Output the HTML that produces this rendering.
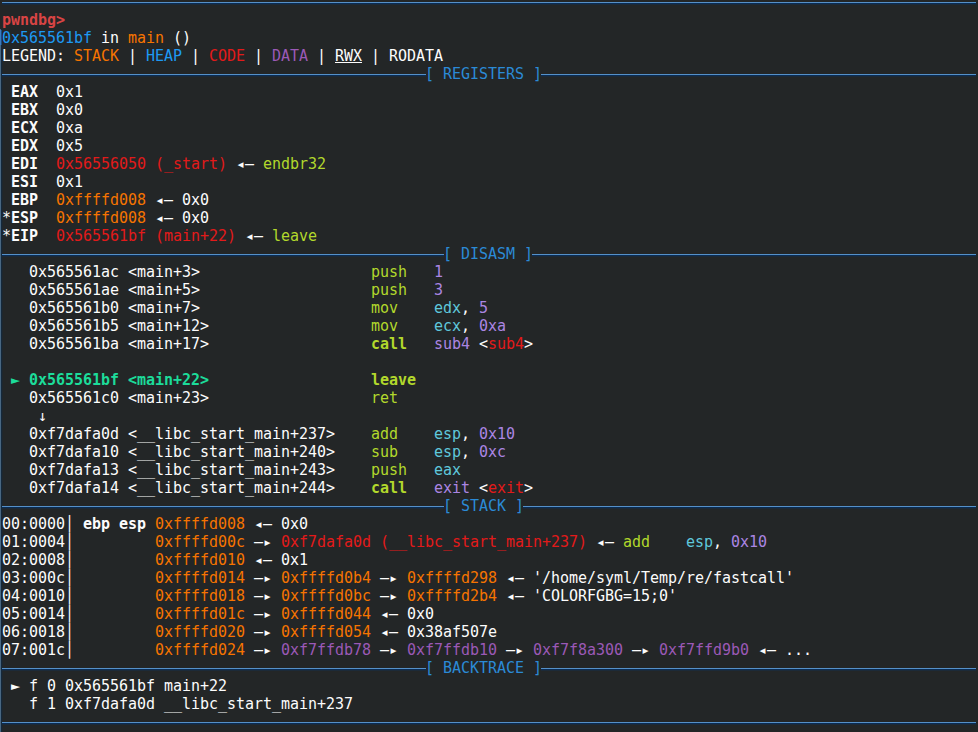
<!DOCTYPE html>
<html lang="en"><head><meta charset="utf-8"><title>pwndbg</title>
<style>
html,body{margin:0;padding:0;background:#232627;}
body{width:978px;height:732px;position:relative;overflow:hidden;color:#fcfcfc;
 font-family:"DejaVu Sans Mono","Liberation Mono",monospace;font-size:15px;line-height:18px;}
.r{position:absolute;left:2px;height:18px;white-space:pre;letter-spacing:-0.0308px;font-kerning:none;font-variant-ligatures:none;}
.b{font-weight:bold}
.p{color:#d84444}
.bl{color:#1d99f3}
.st{color:#f67400}
.cd{color:#e21a1a}
.da{color:#9b59b6}
.g{color:#b2d82c}
.n{color:#ab85e2}
.rg{color:#5fc8dc}
.cur{color:#1cdc9a}
.u{text-decoration:underline}
.ban{color:#2b8ad6}
.hl{position:absolute;height:3px;background:linear-gradient(#5590c8 0,#5590c8 33.3%,#0a2c54 33.3%,#0a2c54 66.6%,#1c2a38 66.6%,#1c2a38 100%);}
.vl{position:absolute;left:0;top:29px;width:3px;height:703px;background:linear-gradient(90deg,#486782 0,#486782 33.3%,#14283b 33.3%,#14283b 66.6%,#1e272e 66.6%);}
.vl2{position:absolute;left:0;top:30px;width:2px;height:15px;background:linear-gradient(90deg,#3a7cc0 0,#3a7cc0 50%,#1d4a7c 50%);}
</style></head><body>
<div class="vl"></div><div class="vl2"></div>

<div class="hl" style="left:2px;top:2px;width:974px"></div>
<div class="r" style="top:11px"><span class="p b">pwndbg&gt;</span></div>
<div class="r" style="top:29px"><span class="bl">0x565561bf</span> in <span class="st">main</span> ()</div>
<div class="r" style="top:47px">LEGEND: <span class="st">STACK</span> | <span class="bl">HEAP</span> | <span class="cd">CODE</span> | <span class="da">DATA</span> | <span class="u">RWX</span> | RODATA</div>
<div class="hl" style="left:2px;top:74px;width:424px"></div>
<div class="hl" style="left:541px;top:74px;width:435px"></div>
<div class="r ban" style="top:65px;left:425px">[ REGISTERS ]</div>
<div class="r" style="top:83px"> <span class="b">EAX</span>  0x1</div>
<div class="r" style="top:101px"> <span class="b">EBX</span>  0x0</div>
<div class="r" style="top:119px"> <span class="b">ECX</span>  0xa</div>
<div class="r" style="top:137px"> <span class="b">EDX</span>  0x5</div>
<div class="r" style="top:155px"> <span class="b">EDI</span>  <span class="cd">0x56556050 (_start)</span> ◂— <span class="g">endbr32</span></div>
<div class="r" style="top:173px"> <span class="b">ESI</span>  0x1</div>
<div class="r" style="top:191px"> <span class="b">EBP</span>  <span class="st">0xffffd008</span> ◂— 0x0</div>
<div class="r" style="top:209px">*<span class="b">ESP</span>  <span class="st">0xffffd008</span> ◂— 0x0</div>
<div class="r" style="top:227px">*<span class="b">EIP</span>  <span class="cd">0x565561bf (main+22)</span> ◂— <span class="g">leave</span></div>
<div class="hl" style="left:2px;top:254px;width:442px"></div>
<div class="hl" style="left:532px;top:254px;width:444px"></div>
<div class="r ban" style="top:245px;left:443px">[ DISASM ]</div>
<div class="r" style="top:263px">   0x565561ac &lt;main+3&gt;                   <span class="g">push</span>   <span class="n">1</span></div>
<div class="r" style="top:281px">   0x565561ae &lt;main+5&gt;                   <span class="g">push</span>   <span class="n">3</span></div>
<div class="r" style="top:299px">   0x565561b0 &lt;main+7&gt;                   <span class="g">mov</span>    <span class="rg">edx</span>, <span class="n">5</span></div>
<div class="r" style="top:317px">   0x565561b5 &lt;main+12&gt;                  <span class="g">mov</span>    <span class="rg">ecx</span>, <span class="n">0xa</span></div>
<div class="r" style="top:335px">   0x565561ba &lt;main+17&gt;                  <span class="g b">call</span>   <span class="n">sub4</span> &lt;<span class="cd">sub4</span>&gt;</div>
<div class="r" style="top:371px"><span class="cur b"> ► 0x565561bf &lt;main+22&gt;</span>                  <span class="g b">leave</span></div>
<div class="r" style="top:389px">   0x565561c0 &lt;main+23&gt;                  <span class="g">ret</span></div>
<div class="r" style="top:407px">    ↓</div>
<div class="r" style="top:425px">   0xf7dafa0d &lt;__libc_start_main+237&gt;    <span class="g">add</span>    <span class="rg">esp</span>, <span class="n">0x10</span></div>
<div class="r" style="top:443px">   0xf7dafa10 &lt;__libc_start_main+240&gt;    <span class="g">sub</span>    <span class="rg">esp</span>, <span class="n">0xc</span></div>
<div class="r" style="top:461px">   0xf7dafa13 &lt;__libc_start_main+243&gt;    <span class="g">push</span>   <span class="rg">eax</span></div>
<div class="r" style="top:479px">   0xf7dafa14 &lt;__libc_start_main+244&gt;    <span class="g b">call</span>   <span class="n">exit</span> &lt;<span class="cd">exit</span>&gt;</div>
<div class="hl" style="left:2px;top:506px;width:442px"></div>
<div class="hl" style="left:523px;top:506px;width:453px"></div>
<div class="r ban" style="top:497px;left:443px">[ STACK ]</div>
<div class="r" style="top:515px">00:0000│ <span class="b">ebp esp</span> <span class="st">0xffffd008</span> ◂— 0x0</div>
<div class="r" style="top:533px">01:0004│         <span class="st">0xffffd00c</span> —▸ <span class="cd">0xf7dafa0d (__libc_start_main+237)</span> ◂— <span class="g">add</span>    <span class="rg">esp</span>, <span class="n">0x10</span></div>
<div class="r" style="top:551px">02:0008│         <span class="st">0xffffd010</span> ◂— 0x1</div>
<div class="r" style="top:569px">03:000c│         <span class="st">0xffffd014</span> —▸ <span class="st">0xffffd0b4</span> —▸ <span class="st">0xffffd298</span> ◂— &#x27;/home/syml/Temp/re/fastcall&#x27;</div>
<div class="r" style="top:587px">04:0010│         <span class="st">0xffffd018</span> —▸ <span class="st">0xffffd0bc</span> —▸ <span class="st">0xffffd2b4</span> ◂— &#x27;COLORFGBG=15;0&#x27;</div>
<div class="r" style="top:605px">05:0014│         <span class="st">0xffffd01c</span> —▸ <span class="st">0xffffd044</span> ◂— 0x0</div>
<div class="r" style="top:623px">06:0018│         <span class="st">0xffffd020</span> —▸ <span class="st">0xffffd054</span> ◂— 0x38af507e</div>
<div class="r" style="top:641px">07:001c│         <span class="st">0xffffd024</span> —▸ <span class="da">0xf7ffdb78</span> —▸ <span class="da">0xf7ffdb10</span> —▸ <span class="da">0xf7f8a300</span> —▸ <span class="da">0xf7ffd9b0</span> ◂— ...</div>
<div class="hl" style="left:2px;top:668px;width:424px"></div>
<div class="hl" style="left:541px;top:668px;width:435px"></div>
<div class="r ban" style="top:659px;left:425px">[ BACKTRACE ]</div>
<div class="r" style="top:677px"> ► f 0 0x565561bf main+22</div>
<div class="r" style="top:695px">   f 1 0xf7dafa0d __libc_start_main+237</div>
<div class="hl" style="left:2px;top:722px;width:974px"></div>
</body></html>
